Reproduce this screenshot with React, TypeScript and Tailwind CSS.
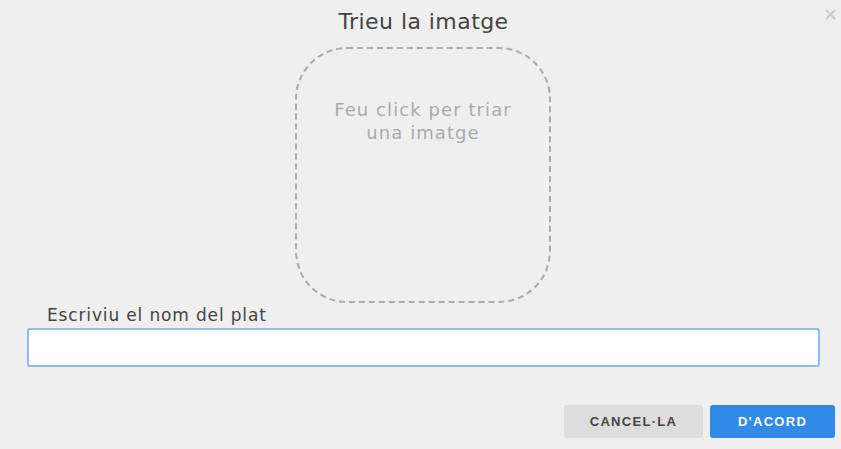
const App = () => {
    return (
        <div className="relative h-[449px] w-full overflow-hidden bg-[#efefef] font-['DejaVu_Sans',sans-serif]">
            <button className="absolute right-[5px] top-[8px] flex h-[12px] w-[12px] items-center justify-center">
                <svg width="11" height="11" viewBox="0 0 11 11">
                    <path d="M1 1 L10 10 M10 1 L1 10" stroke="#c9c9c9" strokeWidth="2" />
                </svg>
            </button>

            <div className="flex flex-col items-center pt-[8px]">
                <h1 className="ml-[6px] h-[28px] text-[22px] tracking-[0.02em] leading-[28px] text-[#444]">Trieu la imatge</h1>
                <div className="ml-[5px] mt-[11px] flex h-[256px] w-[256px] cursor-pointer flex-col items-center rounded-[52px] border-2 border-dashed border-[#aaa] pt-[49px] text-center text-[18px] tracking-[0.06em] leading-[23px] text-[#aaa]">
                    <span>Feu click per triar</span>
                    <span>una imatge</span>
                </div>
            </div>

            <div className="px-[27px] pr-[21px]">
                <label className="mt-[2px] block h-[20px] pl-[20px] text-[17px] tracking-[0.05em] leading-[20px] text-[#444]">
                    Escriviu el nom del plat
                </label>
                <input
                    type="text"
                    className="mt-[3px] block h-[39px] w-full rounded-[3px] border-2 border-[#8dbcf2] bg-white px-2 outline-none"
                />
            </div>

            <div className="mt-[38px] flex justify-end gap-[7px] pr-[6px] font-['Liberation_Sans',sans-serif]">
                <button className="h-[33px] w-[139px] rounded-[3px] bg-[#dddddd] text-[13px] font-semibold tracking-[0.1em] text-[#444]">
                    CANCEL·LA
                </button>
                <button className="h-[33px] w-[125px] rounded-[3px] bg-[#318ae6] text-[13px] font-semibold tracking-[0.1em] text-white">
                    D'ACORD
                </button>
            </div>
        </div>
    )
}

export default App
